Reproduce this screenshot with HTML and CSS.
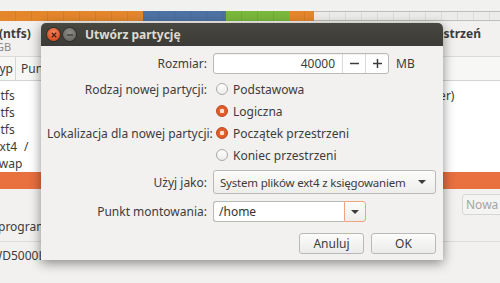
FILE: index.html
```html
<!DOCTYPE html>
<html lang="pl">
  <head>
    <meta charset="utf-8">
    <title>Utwórz partycję</title>
    <link rel="stylesheet" href="styles.css">
  </head>
  <body>

  <div class="screen">
    <div class="topstrip"></div>
    <div class="bar">
      <span class="seg ntfs"></span>
      <span class="seg blue"></span>
      <span class="seg green"></span>
      <span class="seg swap"></span>
      <span class="seg free"></span>
    </div>

    <div class="legend">
      <div class="lg-item">
        <b>(ntfs)</b>
        <span class="size">GB</span>
      </div>
      <div class="lg-item lg-free">
        <b>Wolna przestrzeń</b>
      </div>
    </div>

    <div class="parts">
      <div class="thead">
        <span class="c1">Typ</span><span class="c2">Punkt montowania</span>
      </div>
      <div class="tbody">
        <div class="tr"><span class="c1">ntfs</span><span class="c2"></span><span class="c3">(installer)</span></div>
        <div class="tr"><span class="c1">ntfs</span></div>
        <div class="tr"><span class="c1">ntfs</span></div>
        <div class="tr"><span class="c1">ext4</span><span class="c2">/</span></div>
        <div class="tr"><span class="c1">swap</span></div>
        <div class="tr sel"></div>
      </div>
    </div>

    <div class="below">
      <div class="tools">
        <span class="bgbtn">Nowa tablica partycji...</span>
      </div>
      <div class="bootlabel">program</div>
      <div class="bootdev">WD5000LPVX</div>
    </div>

    <div class="dialog">
      <div class="titlebar">
        <span class="wbtn close">
          <svg width="6" height="6" viewBox="0 0 6 6"><path d="M0.8 0.8L5.2 5.2M5.2 0.8L0.8 5.2" stroke="#4a2012" stroke-width="1.3"/></svg>
        </span>
        <span class="wbtn mini">
          <svg width="6" height="2" viewBox="0 0 6 2"><path d="M0 1H6" stroke="#3a3a37" stroke-width="1.3"/></svg>
        </span>
        <span class="wtitle">Utwórz partycję</span>
      </div>

      <div class="dbody">
        <div class="row r-size">
          <span class="label">Rozmiar:</span>
          <div class="spin">
            <span class="val">40000</span>
            <span class="sb"><svg width="9" height="9" viewBox="0 0 9 9"><path d="M0 4.5H9" stroke="#3c3c3c" stroke-width="1.5"/></svg></span>
            <span class="sb"><svg width="9" height="9" viewBox="0 0 9 9"><path d="M0 4.5H9M4.5 0V9" stroke="#3c3c3c" stroke-width="1.5"/></svg></span>
          </div>
          <span class="unit">MB</span>
        </div>

        <div class="row r-radio r-first">
          <span class="label">Rodzaj nowej partycji:</span>
          <span class="radio"></span><span>Podstawowa</span>
        </div>
        <div class="row r-radio">
          <span class="label"></span>
          <span class="radio on"></span><span>Logiczna</span>
        </div>
        <div class="row r-radio">
          <span class="label">Lokalizacja dla nowej partycji:</span>
          <span class="radio on"></span><span>Początek przestrzeni</span>
        </div>
        <div class="row r-radio">
          <span class="label"></span>
          <span class="radio"></span><span>Koniec przestrzeni</span>
        </div>

        <div class="row r-use">
          <span class="label">Użyj jako:</span>
          <div class="combo">
            <span class="ctext">System plików ext4 z księgowaniem</span>
            <span class="arrow"></span>
          </div>
        </div>

        <div class="row r-mount">
          <span class="label">Punkt montowania:</span>
          <div class="ecombo">
            <span class="entry">/home</span>
            <span class="ebtn"><span class="arrow"></span></span>
          </div>
        </div>

        <div class="buttons">
          <span class="btn">Anuluj</span>
          <span class="btn">OK</span>
        </div>
      </div>
    </div>
  </div>

  </body>
</html>
```

FILE: styles.css
```css
html, body {
  margin: 0;
  padding: 0;
}
body {
  background: #f2f1f0;
  color: #3c3c3c;
  font-family: "Noto Sans", "Open Sans", sans-serif;
  font-size: 12px;
}

.screen {
  position: relative;
  width: 500px;
  height: 283px;
  overflow: hidden;
  background: #f2f1f0;
}

/* background installer window */

.topstrip {
  height: 11px;
  background: #f1f1f0;
}

.bar {
  display: flex;
  height: 10px;
}
.seg {
  height: 10px;
  background-image: repeating-linear-gradient(90deg, transparent 0 15px, rgba(0,0,0,0.07) 15px 16px);
}
.ntfs { width: 143px; background-color: #e4862c; }
.blue { width: 83px; background-color: #4e72a4; }
.green { width: 63px; background-color: #79b83b; }
.swap { width: 25px; background-color: #e4862c; }
.free {
  flex: 1;
  height: 8px;
  background-color: #ececeb;
  border-top: 1px solid #bdbdbb;
  border-bottom: 1px solid #bdbdbb;
}

.legend {
  display: flex;
  justify-content: space-between;
  height: 35px;
  padding-top: 5px;
  box-sizing: border-box;
}
.lg-item {
  display: flex;
  flex-direction: column;
  line-height: 15px;
  color: #3c3c3c;
}
.lg-item:first-child {
  margin-left: -1px;
}
.lg-item .size {
  margin-left: -3px;
  color: #8a8a88;
  font-size: 11px;
  line-height: 12px;
}
.lg-free {
  margin-right: 19px;
}

.parts {
  background: #ffffff;
}
.thead {
  display: flex;
  height: 23px;
  align-items: center;
  background: #f7f7f6;
  border-top: 1px solid #dadad8;
  border-bottom: 1px solid #d3d3d1;
}
.thead .c1 {
  width: 22px;
  border-right: 1px solid #d6d6d4;
  line-height: 23px;
}
.thead .c2 {
  padding-left: 5px;
}
.c1 {
  width: 23px;
  margin-left: -7px;
}
.tbody {
  padding-top: 6px;
}
.tr {
  display: flex;
  height: 17px;
  line-height: 17px;
}
.tr .c1 {
  width: 31px;
}
.tr .c2 {
  width: 40px;
}
.tr .c3 {
  margin-left: 338px;
  white-space: nowrap;
}
.tr.sel {
  background: #e9703f;
}

.below {
  padding-top: 5px;
}
.tools {
  height: 22px;
}
.bgbtn {
  display: inline-block;
  margin-left: 462px;
  height: 19px;
  line-height: 19px;
  padding: 0 3px;
  border: 1px solid #d6d6d4;
  border-radius: 3px;
  background: #f4f4f3;
  color: #a4a4a2;
  white-space: nowrap;
}
.bootlabel {
  margin: 3px 0 0 -2px;
  height: 16px;
  line-height: 16px;
}
.bootdev {
  margin-top: 6px;
  padding-top: 6px;
  margin-left: -9px;
  border-top: 1px solid #dcdcda;
  line-height: 16px;
}

/* dialog */

.dialog {
  position: absolute;
  left: 41px;
  top: 23px;
  width: 402px;
  height: 237px;
  display: flex;
  flex-direction: column;
  background: #f2f1f0;
  border-radius: 5px 5px 0 0;
  box-shadow: 0 3px 12px rgba(0,0,0,0.45);
}

.titlebar {
  display: flex;
  align-items: center;
  height: 23px;
  padding-left: 6px;
  background: linear-gradient(#47463f, #3c3b37);
  border-radius: 5px 5px 0 0;
}
.wbtn {
  display: flex;
  align-items: center;
  justify-content: center;
  width: 13px;
  height: 13px;
  border-radius: 50%;
}
.close {
  background: radial-gradient(circle at 50% 35%, #f48a60, #dc4f24 70%);
  box-shadow: 0 0 0 1px rgba(0,0,0,0.25);
}
.mini {
  margin-left: 3px;
  background: radial-gradient(circle at 50% 35%, #8e8d88, #6c6b66 70%);
  box-shadow: 0 0 0 1px rgba(0,0,0,0.25);
}
.wtitle {
  margin-left: 9px;
  color: #dfdbd2;
  font-weight: bold;
  font-size: 12px;
}

.dbody {
  flex: 1;
  padding: 7px 7px 0 6px;
}

.row {
  display: flex;
  align-items: center;
}
.label {
  width: 160px;
  margin-right: 6px;
  text-align: right;
  white-space: nowrap;
}

.spin {
  display: flex;
  width: 176px;
  height: 21px;
  box-sizing: border-box;
  background: #ffffff;
  border: 1px solid #b9b9b5;
  border-radius: 3px;
  box-shadow: inset 0 1px 1px rgba(0,0,0,0.06);
}
.spin .val {
  flex: 1;
  text-align: right;
  padding-right: 7px;
  line-height: 19px;
}
.spin .sb {
  display: flex;
  align-items: center;
  justify-content: center;
  width: 22px;
  border-left: 1px solid #d9d9d6;
}
.unit {
  margin-left: 7px;
}

.r-radio {
  height: 22px;
}
.r-first {
  margin-top: 4px;
}
.radio {
  width: 12px;
  height: 12px;
  box-sizing: border-box;
  margin: 0 5px 0 3px;
  border: 1px solid #a9a9a5;
  border-radius: 50%;
  background: linear-gradient(#ffffff, #ececea);
}
.radio.on {
  border-color: #b94a1f;
  background: radial-gradient(circle, #fbe2d6 0 2px, #e5612e 2.5px, #d9521f);
}

.r-use {
  margin-top: 4px;
}
.combo {
  display: flex;
  align-items: center;
  justify-content: space-between;
  width: 223px;
  height: 24px;
  box-sizing: border-box;
  padding: 0 9px 0 6px;
  border: 1px solid #b9b9b5;
  border-radius: 3px;
  background: linear-gradient(#fcfcfb, #ededeb);
}
.ctext {
  white-space: nowrap;
  font-size: 11.5px;
  letter-spacing: -0.2px;
}
.arrow {
  width: 0;
  height: 0;
  border-left: 4px solid transparent;
  border-right: 4px solid transparent;
  border-top: 4px solid #3c3c3c;
}

.r-mount {
  margin-top: 7px;
}
.ecombo {
  display: flex;
  width: 153px;
  height: 21px;
}
.entry {
  flex: 1;
  box-sizing: border-box;
  padding-left: 5px;
  line-height: 19px;
  color: #333333;
  background: #ffffff;
  border: 1px solid #b9b9b5;
  border-right: 0;
  border-radius: 3px 0 0 3px;
}
.ebtn {
  display: flex;
  align-items: center;
  justify-content: center;
  width: 22px;
  box-sizing: border-box;
  border: 1px solid #f0a47e;
  border-radius: 0 3px 3px 0;
  background: linear-gradient(#fcfcfb, #ededeb);
}

.buttons {
  display: flex;
  justify-content: flex-end;
  gap: 7px;
  margin-top: 11px;
}
.btn {
  width: 65px;
  height: 21px;
  box-sizing: border-box;
  line-height: 19px;
  text-align: center;
  border: 1px solid #b9b9b5;
  border-radius: 3px;
  background: linear-gradient(#fcfcfb, #ebebe9);
}
```
